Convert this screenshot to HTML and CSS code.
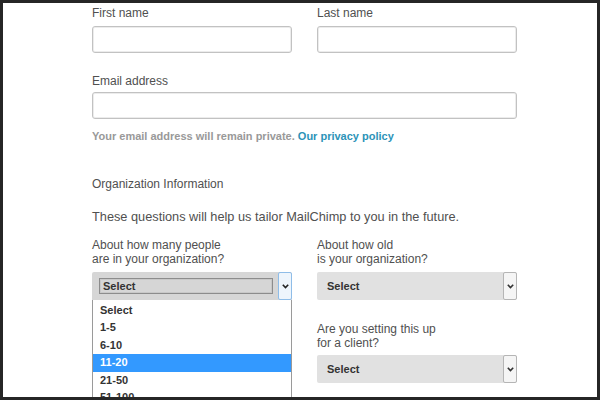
FILE: index.html
```html
<!DOCTYPE html>
<html>
<head>
<meta charset="utf-8">
<link rel="stylesheet" href="styles.css">
</head>
<body>
<div class="frame">
  <div class="form">
    <div class="row">
      <div class="field">
        <div class="label">First name</div>
        <div class="input"></div>
      </div>
      <div class="field">
        <div class="label">Last name</div>
        <div class="input"></div>
      </div>
    </div>
    <div class="email">
      <div class="label">Email address</div>
      <div class="input"></div>
    </div>
    <p class="help">Your email address will remain private. <span class="link">Our privacy policy</span></p>
    <p class="heading">Organization Information</p>
    <p class="intro">These questions will help us tailor MailChimp to you in the future.</p>
    <div class="row selects">
      <div class="field">
        <div class="label">About how many people<br>are in your organization?</div>
        <div class="select open">
          <div class="select-box">Select</div>
          <div class="arrow focus">
            <svg width="7" height="5" viewBox="0 0 7 5"><polyline points="0.8,0.8 3.5,3.6 6.2,0.8" fill="none" stroke="#222" stroke-width="1.6"/></svg>
          </div>
          <ul class="menu">
            <li>Select</li>
            <li>1-5</li>
            <li>6-10</li>
            <li class="hl">11-20</li>
            <li>21-50</li>
            <li>51-100</li>
          </ul>
        </div>
      </div>
      <div class="field">
        <div class="label">About how old<br>is your organization?</div>
        <div class="select">
          <div class="select-text">Select</div>
          <div class="arrow">
            <svg width="7" height="5" viewBox="0 0 7 5"><polyline points="0.8,0.8 3.5,3.6 6.2,0.8" fill="none" stroke="#333" stroke-width="1.6"/></svg>
          </div>
        </div>
        <div class="label second">Are you setting this up<br>for a client?</div>
        <div class="select">
          <div class="select-text">Select</div>
          <div class="arrow">
            <svg width="7" height="5" viewBox="0 0 7 5"><polyline points="0.8,0.8 3.5,3.6 6.2,0.8" fill="none" stroke="#333" stroke-width="1.6"/></svg>
          </div>
        </div>
      </div>
    </div>
  </div>
</div>
</body>
</html>
```

FILE: styles.css
```css
html, body {
  margin: 0;
  padding: 0;
  background: #262626;
}
body {
  padding: 3px;
  font-family: "Liberation Sans", Arial, sans-serif;
}
.frame {
  background: #ffffff;
  height: 394px;
  overflow: hidden;
}
.form {
  padding: 3px 0 0 89px;
  width: 425px;
}
.row {
  display: flex;
  gap: 25px;
}
.field {
  width: 200px;
}
.label {
  font-size: 12px;
  line-height: 14px;
  color: #505050;
  margin-bottom: 6px;
}
.input {
  height: 27px;
  box-sizing: border-box;
  border: 1px solid #c2c2c2;
  border-radius: 3px;
  box-shadow: inset 0 0 0 1px #ececec;
  background: #fff;
}
.email {
  margin-top: 21px;
}
.email .label {
  margin-bottom: 4px;
}
.help {
  margin: 10px 0 0;
  font-size: 11px;
  line-height: 14px;
  font-weight: bold;
  color: #999999;
}
.link {
  color: #2c93b8;
}
.heading {
  margin: 34px 0 0;
  font-size: 12px;
  line-height: 14px;
  color: #505050;
}
.intro {
  margin: 19px 0 0;
  font-size: 12.75px;
  line-height: 14px;
  color: #505050;
}
.selects {
  margin-top: 14px;
}
.select {
  position: relative;
  height: 28px;
  box-sizing: border-box;
  background: #e1e1e1;
  border-radius: 2px;
  display: flex;
  align-items: center;
}
.select.open {
  background: #d6d6d6;
  border-radius: 2px 2px 0 0;
}
.select-text {
  flex: 1;
  padding-left: 10px;
  font-size: 11px;
  font-weight: bold;
  color: #333;
}
.select-box {
  margin-left: 7px;
  width: 174px;
  height: 16px;
  box-sizing: border-box;
  border: 1px solid #8c8c8c;
  box-shadow: inset 0 0 0 1px #c8c8c8;
  padding-left: 3px;
  font-size: 11px;
  line-height: 14px;
  font-weight: bold;
  color: #333;
}
.arrow {
  margin-left: auto;
  width: 14px;
  height: 28px;
  box-sizing: border-box;
  border: 1px solid #b5b5b5;
  border-radius: 2px;
  background: #f5f5f5;
  display: flex;
  align-items: center;
  justify-content: center;
}
.arrow.focus {
  border-color: #8fbde8;
  background: #eef5fc;
}
.label.second {
  margin-top: 22px;
  margin-bottom: 5px;
}
.menu {
  position: absolute;
  left: 0;
  top: 28px;
  width: 200px;
  box-sizing: border-box;
  margin: 0;
  padding: 1.5px 0 0;
  list-style: none;
  background: #fff;
  border: 1px solid #9a9a9a;
  border-top: none;
}
.menu li {
  height: 17.5px;
  line-height: 17.5px;
  padding-left: 7px;
  font-size: 11px;
  font-weight: bold;
  color: #333;
}
.menu li.hl {
  background: #3399ff;
  color: #fff;
}
```
